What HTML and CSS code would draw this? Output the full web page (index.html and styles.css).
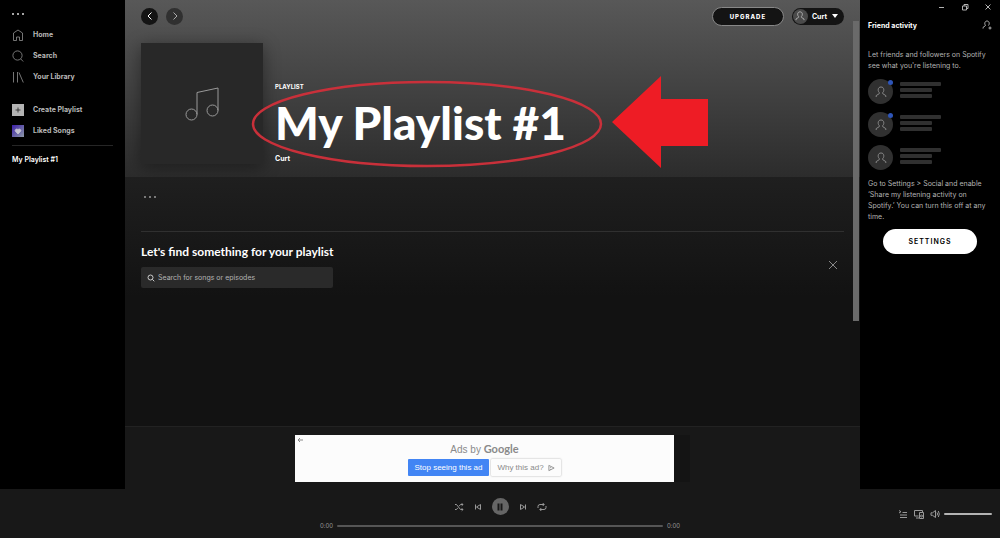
FILE: index.html
```
<!DOCTYPE html>
<html lang="en">
<head>
    <meta charset="UTF-8">
    <title>My Playlist #1</title>
    <link rel="stylesheet" href="styles.css">
</head>
<body>
    <!-- shared icon -->
    <svg class="defs" aria-hidden="true">
        <symbol id="person" viewBox="0 0 12 12">
            <path d="M1.2 11V9.6L4.3 7.6V6.6C3.4 5.8 3.2 5 3.2 3.8C3.2 2 4.3 1 6 1s2.8 1 2.8 2.8C8.8 5 8.6 5.8 7.7 6.6v1l3.1 2V11"/>
        </symbol>
    </svg>

    <div class="app">
        <nav class="sidebar">
            <button class="dots" aria-label="Menu"><i></i><i></i><i></i></button>
            <ul class="menu">
                <li><a href="#">
                    <svg viewBox="0 0 12 12"><path d="M1.5 11.5V4L6 1l4.500 3v7.500H7.500V8h-3v3.500z"/></svg>Home</a></li>
                <li><a href="#">
                    <svg viewBox="0 0 12 12"><circle cx="5.500" cy="5.500" r="4.600"/><path d="M8.700 8.900l2.500 2.600"/></svg>Search</a></li>
                <li><a href="#">
                    <svg viewBox="0 0 12 12"><path d="M1.500 1v10.500M5.500 1v10.500M7 1.500l4.300 10"/></svg>Your Library</a></li>
            </ul>
            <ul class="menu">
                <li><a href="#"><span class="tile tile-add"><svg viewBox="0 0 12 12"><path d="M6 3.500v5M3.500 6h5"/></svg></span>Create Playlist</a></li>
                <li><a href="#"><span class="tile tile-liked"><svg viewBox="0 0 12 12"><path d="M6 9L3.300 6.200C2.500 5 4.500 3 6 4.600C7.500 3 9.500 5 8.700 6.200z"/></svg></span>Liked Songs</a></li>
            </ul>
            <a class="my-list" href="#">My Playlist #1</a>
        </nav>

        <main class="main">
            <section class="hero">
                <header class="topbar">
                    <button class="round" aria-label="Back"><svg viewBox="0 0 16 16"><path d="M9.500 4.500L6 8l3.500 3.500"/></svg></button>
                    <button class="round round-off" aria-label="Forward"><svg viewBox="0 0 16 16"><path d="M6.500 4.500L10 8l-3.500 3.500"/></svg></button>
                    <button class="upgrade">UPGRADE</button>
                    <button class="user">
                        <span class="face"><svg><use href="#person"/></svg></span>Curt
                        <svg class="caret" viewBox="0 0 6 4"><path d="M0 0h6L3 4z"/></svg>
                    </button>
                </header>
                <div class="cover-row">
                    <div class="cover">
                        <svg viewBox="0 0 34 36"><circle cx="6.500" cy="28.500" r="5.500"/><circle cx="27.500" cy="24.500" r="5.500"/><path d="M12 28.500V6.500L33 2v22.500"/></svg>
                    </div>
                    <div class="info">
                        <span class="kind">PLAYLIST</span>
                        <h1>My Playlist #1</h1>
                        <a class="owner" href="#">Curt</a>
                    </div>
                </div>
            </section>

            <section class="content">
                <button class="dots dots-dim" aria-label="More"><i></i><i></i><i></i></button>
                <div class="find">
                    <div>
                        <h2>Let's find something for your playlist</h2>
                        <label class="search">
                            <svg viewBox="0 0 8 8"><circle cx="3.500" cy="3.500" r="2.500"/><path d="M5.300 5.300l2 2"/></svg>
                            <input type="text" placeholder="Search for songs or episodes" aria-label="Search for songs or episodes">
                        </label>
                    </div>
                    <button class="close" aria-label="Close"><svg viewBox="0 0 10 10"><path d="M1 1l8 8M9 1L1 9"/></svg></button>
                </div>
            </section>

            <section class="ad-bar">
                <div class="ad-slot">
                    <div class="ad">
                        <button class="ad-back" aria-label="Back"><svg viewBox="0 0 6 6"><path d="M6 3H1M3 1L1 3l2 2"/></svg></button>
                        <p>Ads by <b>Google</b></p>
                        <div class="ad-btns">
                            <button class="ad-stop">Stop seeing this ad</button>
                            <button class="ad-why">Why this ad? <svg viewBox="0 0 8 8"><path d="M1 1v6l6-3zM3 3v1M3 5v1"/></svg></button>
                        </div>
                    </div>
                </div>
            </section>

            <div class="scrollbar"></div>

            <!-- ellipse and arrow pointing at the title -->
            <svg class="callout" viewBox="0 0 460 96">
                <ellipse cx="176" cy="49" rx="174" ry="42"/>
                <path d="M361 47L410 1v23h47v47h-47v22z"/>
            </svg>
        </main>

        <aside class="friends">
            <div class="win">
                <button aria-label="Minimize"><svg viewBox="0 0 8 8"><path d="M1 4.500h5"/></svg></button>
                <button aria-label="Restore"><svg viewBox="0 0 8 8"><path d="M1.500 3h4v4h-4zM3 3V1.500h4v4H5.500"/></svg></button>
                <button aria-label="Close window"><svg viewBox="0 0 8 8"><path d="M1.500 1.500l5 5M6.500 1.500l-5 5"/></svg></button>
            </div>
            <div class="friends-head">
                <h3>Friend activity</h3>
                <button aria-label="Add friend"><svg viewBox="0 0 10 10"><path d="M1 8.500V7.500L3.500 5.500C2 3.500 3 1 5 1S8 3.500 6.500 5.500M8 6.500v3M6.500 8h3"/></svg></button>
            </div>
            <p>Let friends and followers on Spotify see what you're listening to.</p>
            <ul class="people">
                <li><span class="avatar online"><svg><use href="#person"/></svg></span><span class="lines"><i></i><i></i><i></i></span></li>
                <li><span class="avatar online"><svg><use href="#person"/></svg></span><span class="lines"><i></i><i></i><i></i></span></li>
                <li><span class="avatar"><svg><use href="#person"/></svg></span><span class="lines"><i></i><i></i><i></i></span></li>
            </ul>
            <p>Go to Settings &gt; Social and enable ‘Share my listening activity on Spotify.’ You can turn this off at any time.</p>
            <button class="settings">SETTINGS</button>
        </aside>

        <footer class="player">
            <div class="center">
                <div class="controls">
                    <button aria-label="Shuffle"><svg viewBox="0 0 10 10"><path d="M1 2.500h1.500l4 5H9M1 7.500h1.500l1.300-1.600M5.200 4.100l1.300-1.600H9M7.700 1.200L9 2.500 7.700 3.800M7.700 6.200L9 7.500 7.700 8.800"/></svg></button>
                    <button aria-label="Previous"><svg viewBox="0 0 10 10"><path d="M2.500 2.500v5M7.500 2.500v5L3.500 5z"/></svg></button>
                    <button class="pause" aria-label="Pause"><svg viewBox="0 0 10 10"><path d="M3.500 1.500v7M6.500 1.500v7"/></svg></button>
                    <button aria-label="Next"><svg viewBox="0 0 10 10"><path d="M7.500 2.500v5M2.500 2.500v5l4-2.500z"/></svg></button>
                    <button aria-label="Repeat"><svg viewBox="0 0 10 10"><path d="M1 6V4.500a2 2 0 0 1 2-2h4M9 4v1.500a2 2 0 0 1-2 2H3M5.700 1l1.500 1.500L5.700 4M4.300 6L2.800 7.500 4.300 9"/></svg></button>
                </div>
                <div class="progress"><span>0:00</span><div class="bar"></div><span>0:00</span></div>
            </div>
            <div class="extras">
                <button aria-label="Queue"><svg viewBox="0 0 10 10"><path d="M1 1.500l2 1.200L1 4M4.500 3.500H9M2 6h7M2 8.500h7"/></svg></button>
                <button aria-label="Devices"><svg viewBox="0 0 10 10"><path d="M4.500 7H.5V1.500h8V3M2 9h3M5.500 3.500h4v6h-4z"/><circle cx="7.500" cy="7" r="1"/></svg></button>
                <button aria-label="Volume"><svg viewBox="0 0 10 10"><path d="M1 3.800v2.500h1.500L5.500 8.500v-7L2.500 3.800zM7 3.500q1.200 1.500 0 3M8.300 2q2 3 0 6"/></svg></button>
                <div class="bar volume"></div>
            </div>
        </footer>
    </div>
</body>
</html>
```
FILE: styles.css
```
* {
    box-sizing: border-box;
}
body {
    margin: 0;
    background: #000;
    color: #fff;
    font-family: Inter, "Liberation Sans", sans-serif;
    font-size: 7px;
    line-height: 11px;
}
h1, h2, h3, p, ul {
    margin: 0;
    padding: 0;
}
ul {
    list-style: none;
}
a {
    color: inherit;
    text-decoration: none;
}
button {
    display: flex;
    align-items: center;
    justify-content: center;
    padding: 0;
    border: none;
    background: none;
    color: inherit;
    font: inherit;
    cursor: pointer;
}
svg {
    display: block;
    fill: none;
    stroke: currentColor;
    stroke-width: 1;
}
.defs {
    position: absolute;
    width: 0;
    height: 0;
}
.app {
    display: grid;
    grid-template-columns: 125px 1fr 140px;
    grid-template-rows: 1fr 49px;
    min-height: 100vh;
}

/* left menu */
.sidebar {
    padding: 12px 12px 0;
}
.dots {
    gap: 3px;
    width: 12px;
    height: 4px;
}
.dots i {
    flex: none;
    width: 2px;
    height: 2px;
    border-radius: 50%;
    background: #ddd;
}
.menu {
    margin-top: 8px;
    color: #b8b8b8;
    font-weight: 700;
}
.menu a {
    display: flex;
    align-items: center;
    gap: 9px;
    height: 21px;
}
.menu svg {
    width: 12px;
    height: 12px;
    stroke-width: 0.8;
    opacity: 0.8;
}
.menu + .menu {
    margin-top: 12px;
    padding-bottom: 4px;
    border-bottom: 1px solid #262626;
}
.tile-add {
    background: #b3b3b3;
    color: #000;
}
.tile-liked {
    background: linear-gradient(135deg, #3c1fa8, #8d9aa8);
    color: #ddd;
}
.tile-liked svg {
    fill: #ddd;
}
.my-list {
    display: block;
    margin-top: 8px;
    font-weight: 600;
}

/* playlist */
.main {
    position: relative;
    display: flex;
    flex-direction: column;
    background: #121212;
}
.hero {
    padding: 0 16px 13px;
    background: linear-gradient(#585858, #2c2c2c);
}
.topbar {
    display: flex;
    align-items: center;
    gap: 8px;
    height: 32px;
}
.round {
    width: 17px;
    height: 17px;
    border-radius: 50%;
    background: #141414;
}
.round svg {
    width: 16px;
    height: 16px;
}
.round-off {
    background: #303030;
    color: #aaa;
}
.upgrade {
    width: 72px;
    height: 19px;
    margin-left: auto;
    border: 1px solid #888;
    border-radius: 10px;
    background: #141414;
    font-size: 6px;
    font-weight: 800;
    letter-spacing: 1px;
}
.user {
    gap: 4px;
    height: 17px;
    padding: 0 6px 0 1px;
    border-radius: 9px;
    background: #141414;
    font-weight: 700;
}
.face {
    display: flex;
    align-items: center;
    justify-content: center;
    width: 15px;
    height: 15px;
    border-radius: 50%;
    background: #4a4a4a;
    color: #bbb;
}
.face svg {
    width: 10px;
    height: 10px;
}
.caret {
    width: 6px;
    height: 4px;
    margin-left: 1px;
    fill: #fff;
    stroke: none;
}
.cover-row {
    display: flex;
    align-items: flex-end;
    gap: 12px;
    margin-top: 11px;
}
.cover {
    display: flex;
    flex: none;
    align-items: center;
    justify-content: center;
    width: 122px;
    height: 121px;
    background: #282828;
    box-shadow: 0 3px 16px rgba(0,0,0,0.4);
    color: #999;
}
.cover svg {
    width: 34px;
    height: 36px;
}
.kind {
    display: block;
    font-size: 6px;
    font-weight: 700;
}
.info h1 {
    margin: 1px 0;
    font-family: Lato, sans-serif;
    font-size: 46px;
    font-weight: 900;
    line-height: 60px;
}
.owner {
    display: block;
    font-weight: 700;
    line-height: 10px;
}
.content {
    flex: 1;
    padding: 16px 16px 0;
    background: linear-gradient(#1f1f1f, #121212 120px);
}
.dots-dim {
    width: 17px;
    height: 8px;
}
.dots-dim i {
    background: #999;
}
.find {
    display: flex;
    justify-content: space-between;
    margin-top: 30px;
    padding-top: 12px;
    border-top: 1px solid #303030;
}
.find h2 {
    font-family: Lato, sans-serif;
    font-size: 12px;
    line-height: 16px;
}
.search {
    display: flex;
    align-items: center;
    gap: 3px;
    width: 192px;
    height: 21px;
    margin-top: 7px;
    padding: 0 6px;
    border-radius: 2px;
    background: #2a2a2a;
}
.search svg {
    width: 8px;
    height: 8px;
    color: #ccc;
}
.search input {
    flex: 1;
    min-width: 0;
    padding: 0;
    border: none;
    outline: none;
    background: none;
    color: #fff;
    font: inherit;
}
.search input::placeholder {
    color: #b3b3b3;
}
.close {
    align-self: flex-start;
    width: 10px;
    height: 10px;
    margin: 16px 6px 0 0;
    color: #888;
}
.close svg {
    width: 10px;
    height: 10px;
}
.scrollbar {
    position: absolute;
    top: 21px;
    right: 1px;
    width: 6px;
    height: 300px;
    background: #6a6a6a;
}
.callout {
    position: absolute;
    top: 75px;
    left: 126px;
    width: 460px;
    height: 96px;
    pointer-events: none;
}
.callout ellipse {
    stroke: #c9303a;
    stroke-width: 2.5;
}
.callout path {
    fill: #ee1c25;
    stroke: none;
}

/* ad */
.ad-bar {
    display: flex;
    justify-content: center;
    padding: 8px 0 7px;
    border-top: 1px solid #222;
    background: #181818;
}
.ad-slot {
    width: 395px;
    padding-right: 16px;
    background: #141414;
}
.ad {
    position: relative;
    display: flex;
    flex-direction: column;
    align-items: center;
    height: 47px;
    padding-top: 6px;
    background: #fcfcfc;
    color: #8a8a8a;
    font-family: "Liberation Sans", Arial, sans-serif;
}
.ad p {
    font-size: 10px;
    line-height: 15px;
}
.ad b {
    font-family: Lato, sans-serif;
    font-size: 11px;
}
.ad-back {
    position: absolute;
    top: 2px;
    left: 2px;
}
.ad-back svg {
    width: 6px;
    height: 6px;
}
.ad-btns {
    display: flex;
    gap: 2px;
    margin-top: 2px;
}
.ad-btns button {
    height: 17px;
    border-radius: 1px;
    font-size: 8px;
}
.ad .ad-stop {
    width: 81px;
    background: #4285f4;
    color: #fff;
}
.ad .ad-why {
    gap: 4px;
    width: 70px;
    box-shadow: 0 0 2px rgba(0,0,0,0.35);
}
.ad-why svg {
    width: 7px;
    height: 8px;
}

/* friends */
.friends {
    padding: 0 8px;
    color: #b3b3b3;
}
.win {
    display: flex;
    justify-content: flex-end;
    gap: 15px;
    padding-top: 3px;
}
.win svg {
    width: 8px;
    height: 8px;
}
.friends-head {
    display: flex;
    align-items: center;
    justify-content: space-between;
    height: 12px;
    margin: 8px 0 18px;
}
.friends-head h3 {
    color: #fff;
    font-size: 7px;
    font-weight: 700;
}
.friends-head svg {
    width: 10px;
    height: 10px;
}
.people {
    display: grid;
    gap: 8px;
    margin: 8px 0;
}
.people li {
    display: flex;
    gap: 7px;
}
.avatar {
    position: relative;
    display: flex;
    align-items: center;
    justify-content: center;
    width: 25px;
    height: 25px;
    border-radius: 50%;
    background: #303030;
    color: #888;
}
.avatar svg {
    width: 12px;
    height: 12px;
}
.online::after {
    content: "";
    position: absolute;
    top: 1px;
    right: 0;
    width: 5px;
    height: 5px;
    border-radius: 50%;
    background: #2e55b8;
}
.lines {
    display: grid;
    align-content: start;
    gap: 2px;
    padding-top: 3px;
}
.lines i {
    width: 32px;
    height: 4px;
    border-radius: 1px;
    background: #303030;
}
.lines i:first-child {
    width: 41px;
}
.settings {
    width: 94px;
    height: 25px;
    margin: 7px auto 0;
    border-radius: 13px;
    background: #fff;
    color: #000;
    font-weight: 600;
    letter-spacing: 1px;
}

/* player */
.player {
    grid-column: 1 / -1;
    display: grid;
    grid-template-columns: 1fr 360px 1fr;
    padding: 0 8px;
    background: #181818;
    color: #999;
}
.center {
    grid-column: 2;
}
.controls {
    display: flex;
    align-items: center;
    justify-content: center;
    gap: 9px;
    padding-top: 9px;
}
.controls svg, .extras svg {
    width: 10px;
    height: 10px;
}
.controls .pause {
    width: 17px;
    height: 17px;
    border-radius: 50%;
    background: #666;
    color: #181818;
}
.pause svg {
    stroke-width: 2;
}
.progress {
    display: flex;
    align-items: center;
    gap: 4px;
    margin-top: 5px;
    font-size: 6px;
}
.bar {
    flex: 1;
    height: 2px;
    border-radius: 1px;
    background: #555;
}
.extras {
    display: flex;
    align-items: center;
    justify-content: flex-end;
    gap: 6px;
}
.extras .volume {
    flex: none;
    width: 48px;
    margin-left: -2px;
    background: #b3b3b3;
}
```
